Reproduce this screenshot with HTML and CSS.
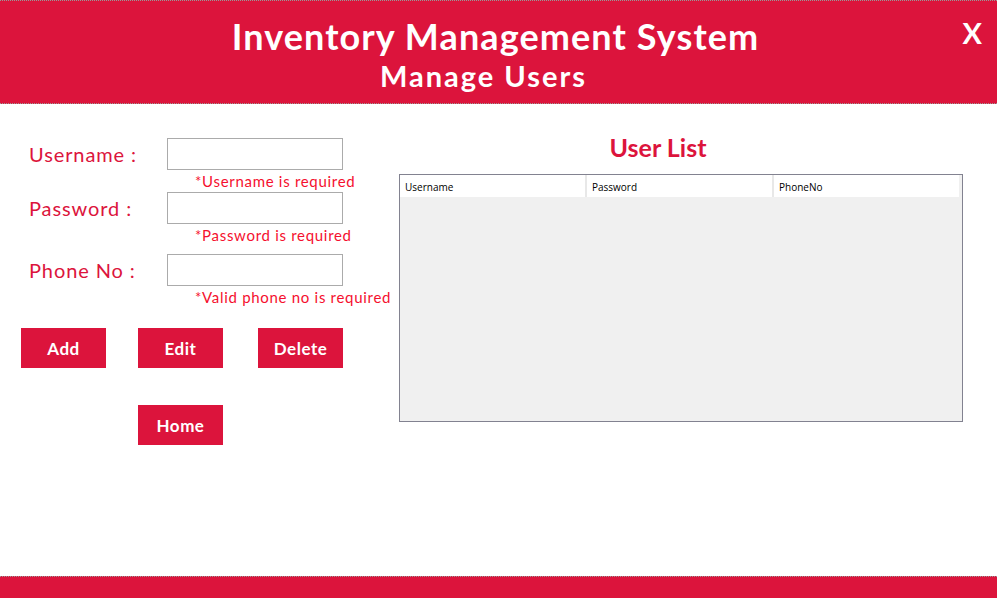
FILE: index.html
```html
<!DOCTYPE html>
<html>
<head>
<meta charset="utf-8">
<link rel="stylesheet" href="styles.css">
</head>
<body>
<div class="app">
  <header class="header">
    <div class="title">Inventory Management System</div>
    <div class="subtitle">Manage Users</div>
    <div class="close">X</div>
  </header>
  <main class="main">
    <section class="form">
      <div class="field">
        <label class="label">Username :</label>
        <div class="control">
          <div class="input"></div>
          <div class="error">*Username is required</div>
        </div>
      </div>
      <div class="field">
        <label class="label">Password :</label>
        <div class="control">
          <div class="input"></div>
          <div class="error">*Password is required</div>
        </div>
      </div>
      <div class="field">
        <label class="label">Phone No :</label>
        <div class="control">
          <div class="input"></div>
          <div class="error">*Valid phone no is required</div>
        </div>
      </div>
      <div class="buttons">
        <button class="btn btn-add">Add</button>
        <button class="btn btn-edit">Edit</button>
        <button class="btn btn-delete">Delete</button>
      </div>
      <div class="buttons home-row">
        <button class="btn btn-home">Home</button>
      </div>
    </section>
    <section class="list">
      <h2 class="list-title">User List</h2>
      <div class="grid">
        <div class="grid-head">
          <div class="col">Username</div>
          <div class="col">Password</div>
          <div class="col">PhoneNo</div>
        </div>
      </div>
    </section>
  </main>
  <footer class="footer"></footer>
</div>
</body>
</html>
```

FILE: styles.css
```css
* { box-sizing: border-box; }
html, body { margin: 0; padding: 0; }
body {
  width: 997px;
  height: 598px;
  overflow: hidden;
  background: #fff;
  font-family: "Lato", "Open Sans", sans-serif;
}
.app {
  display: flex;
  flex-direction: column;
  height: 598px;
}
.header {
  position: relative;
  height: 104px;
  background: #dc143c;
  border-top: 1px dotted #9a9a9a;
  border-bottom: 1px dotted #9a9a9a;
  color: #fff;
  text-align: center;
  padding-top: 14px;
}
.title {
  font-size: 36px;
  font-weight: 700;
  letter-spacing: 1.1px;
  line-height: 42px;
  margin-left: -6px;
}
.subtitle {
  font-size: 29px;
  font-weight: 700;
  letter-spacing: 2px;
  line-height: 34px;
  margin-top: 2px;
  margin-left: -30px;
}
.close {
  position: absolute;
  right: 15px;
  top: 15px;
  font-size: 29px;
  font-weight: 700;
  line-height: 34px;
}
.main {
  flex: 1;
  display: flex;
}
.form {
  width: 399px;
  padding-top: 34px;
}
.field {
  display: flex;
}
.label {
  width: 167px;
  padding-left: 29px;
  color: #dc143c;
  font-size: 20px;
  letter-spacing: 0.9px;
  line-height: 24px;
  padding-top: 4px;
}
.control {
  display: flex;
  flex-direction: column;
}
.input {
  width: 176px;
  height: 32px;
  border: 1px solid #ababab;
  background: #fff;
}
.error {
  color: #f5102e;
  font-size: 15px;
  letter-spacing: 0.7px;
  line-height: 18px;
  padding-left: 28px;
  margin-top: 2px;
  white-space: nowrap;
}
.field:nth-child(1) { height: 54px; }
.field:nth-child(2) { height: 62px; }
.field:nth-child(3) { height: 74px; }
.buttons {
  display: flex;
  padding-left: 21px;
  gap: 32px;
}
.btn {
  width: 85px;
  height: 40px;
  border: none;
  background: #dc143c;
  color: #fff;
  font-family: inherit;
  font-weight: 700;
  font-size: 17px;
  letter-spacing: 0.5px;
  padding: 0;
}
.btn-delete { margin-left: 3px; }
.home-row {
  padding-left: 138px;
  margin-top: 37px;
}
.list {
  flex: 1;
  padding-top: 28px;
}
.list-title {
  margin: 0;
  width: 518px;
  text-align: center;
  color: #dc143c;
  font-size: 25px;
  font-weight: 700;
  letter-spacing: 0;
  line-height: 30px;
}
.grid {
  width: 564px;
  height: 248px;
  margin-top: 12px;
  border: 1px solid #828290;
  background: #f0f0f0;
}
.grid-head {
  display: flex;
  height: 22px;
  background: #fff;
  width: 561px;
}
.col {
  width: 187px;
  border-right: 2px solid #e8e8e8;
  font-family: "Open Sans", sans-serif;
  font-size: 10px;
  line-height: 25px;
  padding-left: 5px;
  color: #000;
}
.col:last-child { border-right: 2px solid #f0f0f0; }
.footer {
  height: 22px;
  background: #dc143c;
  border-top: 1px dotted #9a9a9a;
}
```
